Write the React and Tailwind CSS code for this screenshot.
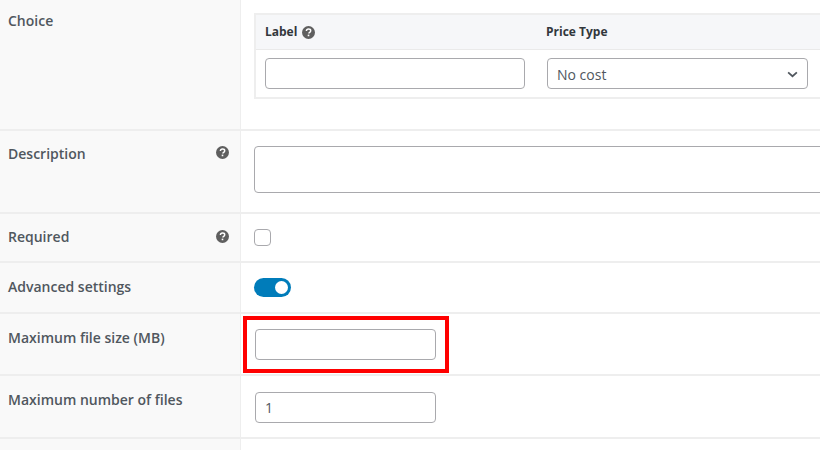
import React from 'react';

const HelpIcon = ({ size = 13 }) => (
  <svg width={size} height={size} viewBox="0 0 16 16" className="shrink-0">
    <circle cx="8" cy="8" r="8" fill="#5f5f5f" />
    <path d="M5.4 6.2C5.5 4.7 6.6 3.8 8.1 3.8c1.5 0 2.6.9 2.6 2.1 0 1-.6 1.5-1.3 2-.6.4-.9.7-.9 1.4" fill="none" stroke="#fff" strokeWidth="1.8" />
    <rect x="7" y="10.6" width="2" height="2" fill="#fff" />
  </svg>
);

const Row = ({ label, help, height, labelTop, helpTop, children }) => (
  <div className={`flex ${height} border-b-2 border-[#eeeeee]`}>
    <div className="w-[241px] shrink-0 bg-[#f9f9f9] border-r border-[#eeeeee] pl-2 pr-[11px] flex justify-between items-start">
      <span className={`font-semibold text-[14px] leading-[20px] text-[#50575e] ${labelTop}`}>{label}</span>
      {help && <span className={helpTop}><HelpIcon /></span>}
    </div>
    <div className="relative flex-1 min-w-0 pl-[13px]">{children}</div>
  </div>
);

export default function App() {
  return (
    <div className="w-[820px] h-[450px] overflow-hidden bg-white" style={{ fontFamily: '"Open Sans", sans-serif' }}>
      <div className="flex h-[131px] border-b-2 border-[#eeeeee]">
        <div className="w-[241px] shrink-0 bg-[#f9f9f9] border-r border-[#eeeeee] pl-2">
          <span className="block font-semibold text-[14px] leading-[20px] text-[#50575e] mt-[11px]">Choice</span>
        </div>
        <div className="flex-1 min-w-0 pl-[13px] pt-[13px]">
          <div className="w-[600px] h-[86px] border-2 border-[#eeeeee] border-r-0">
            <div className="h-[35px] bg-[#f6f7f9] border-b border-[#eaeaea] flex items-center pl-[9px]">
              <div className="w-[281px] flex items-center gap-[5px]">
                <span className="font-bold text-[12px] text-[#32373c]">Label</span>
                <HelpIcon />
              </div>
              <span className="font-bold text-[12px] text-[#32373c]">Price Type</span>
            </div>
            <div className="flex pl-[9px] pt-[8px] gap-[22px]">
              <input className="w-[260px] h-[31px] bg-white border border-[#a9a9ad] rounded-[4px]" />
              <div className="w-[261px] h-[31px] bg-white border border-[#a9a9ad] rounded-[4px] flex items-center justify-between pl-[9px] pr-[9px] pt-[2px]">
                <span className="text-[14px] text-[#50575e]">No cost</span>
                <svg width="11" height="7" viewBox="0 0 12 8" fill="none" stroke="#50575e" strokeWidth="2">
                  <path d="M1 1.5 L6 6 L11 1.5" />
                </svg>
              </div>
            </div>
          </div>
        </div>
      </div>

      <Row label="Description" help height="h-[83px]" labelTop="mt-[13px]" helpTop="mt-[15px]">
        <textarea className="mt-[15px] block w-[600px] h-[47px] border border-[#a9a9ad] rounded-[4px] resize-none" />
      </Row>

      <Row label="Required" help height="h-[49px]" labelTop="mt-[13px]" helpTop="mt-[16px]">
        <div className="mt-[15px] w-[17px] h-[17px] bg-white border border-[#a9a9ad] rounded-[4px]" />
      </Row>

      <Row label="Advanced settings" height="h-[51px]" labelTop="mt-[14px]">
        <div className="mt-[15px] w-[37px] h-[19px] rounded-full bg-[#007cba] flex items-center justify-end pr-[3px]">
          <div className="w-[13px] h-[13px] rounded-full bg-white" />
        </div>
      </Row>

      <Row label="Maximum file size (MB)" height="h-[62px]" labelTop="mt-[14px]">
        <input className="mt-[15px] block ml-px w-[181px] h-[31px] bg-white border border-[#a9a9ad] rounded-[4px]" />
        <div className="absolute left-[2px] top-[2px] w-[206px] h-[57px] border-[4px] border-[#ff0000]" />
      </Row>

      <Row label="Maximum number of files" height="h-[63px]" labelTop="mt-[14px]">
        <input
          defaultValue="1"
          className="mt-[16px] block ml-px w-[181px] h-[31px] bg-white border border-[#a9a9ad] rounded-[4px] pl-[9px] text-[14px] text-[#50575e]"
        />
      </Row>

      <div className="flex h-[12px]">
        <div className="w-[241px] shrink-0 bg-[#f9f9f9] border-r border-[#eeeeee]" />
      </div>
    </div>
  );
}
